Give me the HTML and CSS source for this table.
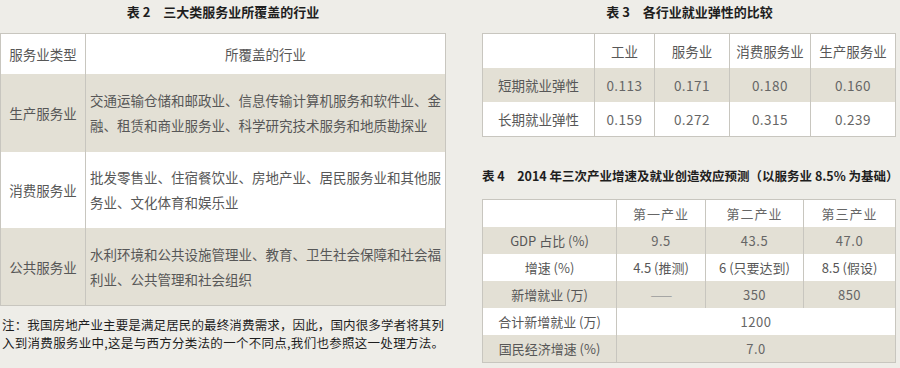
FILE: index.html
```html
<!DOCTYPE html>
<html lang="zh-CN">
<head>
<meta charset="utf-8">
<link rel="stylesheet" href="styles.css">
</head>
<body>
<div class="page">
  <section class="left">
    <div class="title">表 2　三大类服务业所覆盖的行业</div>
    <table class="t2">
      <tr class="hd"><td class="c1">服务业类型</td><td class="c2 center">所覆盖的行业</td></tr>
      <tr class="beige r1"><td class="c1">生产服务业</td><td class="c2">交通运输仓储和邮政业、信息传输计算机服务和软件业、金融、租赁和商业服务业、科学研究技术服务和地质勘探业</td></tr>
      <tr class="r2"><td class="c1">消费服务业</td><td class="c2">批发零售业、住宿餐饮业、房地产业、居民服务业和其他服务业、文化体育和娱乐业</td></tr>
      <tr class="beige r3"><td class="c1">公共服务业</td><td class="c2">水利环境和公共设施管理业、教育、卫生社会保障和社会福利业、公共管理和社会组织</td></tr>
    </table>
    <p class="note">注：我国房地产业主要是满足居民的最终消费需求，因此，国内很多学者将其列<br>入到消费服务业中,这是与西方分类法的一个不同点,我们也参照这一处理方法。</p>
  </section>
  <section class="right">
    <div class="title">表 3　各行业就业弹性的比较</div>
    <table class="t3">
      <colgroup><col class="w1"><col class="w2"><col class="w3"><col class="w4"><col class="w5"></colgroup>
      <tr><td></td><td>工业</td><td>服务业</td><td>消费服务业</td><td>生产服务业</td></tr>
      <tr class="beige"><td>短期就业弹性</td><td class="num">0.113</td><td class="num">0.171</td><td class="num">0.180</td><td class="num">0.160</td></tr>
      <tr><td>长期就业弹性</td><td class="num">0.159</td><td class="num">0.272</td><td class="num">0.315</td><td class="num">0.239</td></tr>
    </table>
    <div class="title t4title">表 4　2014 年三次产业增速及就业创造效应预测（以服务业 8.5% 为基础）</div>
    <table class="t4">
      <colgroup><col class="v1"><col class="v2"><col class="v3"><col class="v4"></colgroup>
      <tr><td></td><td class="song">第一产业</td><td class="song">第二产业</td><td class="song">第三产业</td></tr>
      <tr class="beige"><td>GDP 占比 (%)</td><td class="num">9.5</td><td class="num">43.5</td><td class="num">47.0</td></tr>
      <tr><td>增速 (%)</td><td>4.5 (推测)</td><td>6 (只要达到)</td><td>8.5 (假设)</td></tr>
      <tr class="beige"><td>新增就业 (万)</td><td class="dash">——</td><td class="num">350</td><td class="num">850</td></tr>
      <tr><td>合计新增就业 (万)</td><td colspan="3" class="num">1200</td></tr>
      <tr class="beige"><td>国民经济增速 (%)</td><td colspan="3" class="num">7.0</td></tr>
    </table>
  </section>
</div>
</body>
</html>
```
FILE: styles.css
```css
html, body {
  margin: 0;
  padding: 0;
  background: #eeede8;
}
body {
  font-family: "Noto Sans CJK SC", "Noto Sans", sans-serif;
  color: #575757;
  width: 900px;
  height: 368px;
  overflow: hidden;
}
.page {
  display: flex;
  align-items: flex-start;
}
.left {
  width: 446px;
}
.right {
  width: 415px;
  margin-left: 36px;
}
.title {
  height: 33px;
  line-height: 24px;
  font-size: 13px;
  font-weight: bold;
  color: #1e1e1e;
  text-align: center;
  white-space: nowrap;
}
table {
  border-collapse: collapse;
  table-layout: fixed;
  border: 1px solid #c8c6bf;
  background: #fff;
}
td {
  padding: 0;
  text-align: center;
  vertical-align: middle;
}
tr.beige {
  background: #e3e0d5;
}

/* table 2 */
.t2 {
  width: 446px;
  font-size: 13.5px;
}
.t2 .c1 {
  width: 84px;
  border-right: 1px solid #c8c6bf;
}
.t2 .c2 {
  text-align: justify;
  line-height: 25px;
  padding: 0 4px 0 4px;
}
.t2 .c2.center {
  text-align: center;
}
.t2 .hd td { height: 40px; }
.t2 .r1 td { height: 78px; }
.t2 .r2 td { height: 76px; }
.t2 .r3 td { height: 77px; }

.note {
  margin: 10px 0 0 2px;
  width: 442px;
  font-size: 12.5px;
  line-height: 18px;
  color: #1e1e1e;
  text-align: justify;
  text-align-last: justify;
}

/* table 3 */
.t3 {
  width: 414px;
  font-size: 13.5px;
}
.t3 .w1 { width: 112px; }
.t3 .w2 { width: 60px; }
.t3 .w3 { width: 75px; }
.t3 .w4 { width: 81px; }
.t3 .w5 { width: 85px; }
.t3 td {
  height: 34px;
  border-left: 1px solid #c8c6bf;
}
.num {
  color: #666;
  letter-spacing: 0.5px;
}

.t4title {
  margin-top: 27px;
  height: 35px;
  font-size: 12.5px;
  text-align: left;
}

/* table 4 */
.t4 {
  width: 414px;
  font-size: 13px;
}
.t4 .v1 { width: 134px; }
.t4 .v2 { width: 89px; }
.t4 .v3 { width: 98px; }
.t4 .v4 { width: 92px; }
.t4 td {
  height: 27px;
  border-left: 1px solid #c8c6bf;
}
.t4 .song {
  color: #666;
  letter-spacing: 1px;
}
.t4 .dash {
  color: #999;
  letter-spacing: -1px;
}
```
